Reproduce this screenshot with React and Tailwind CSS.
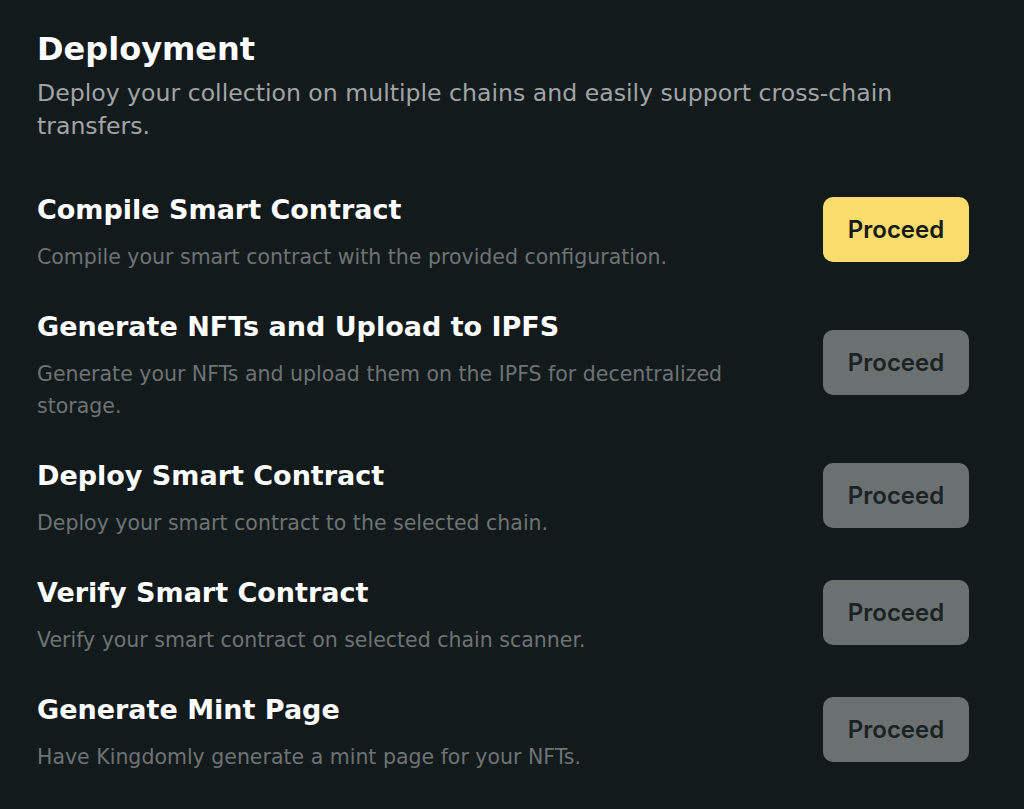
const steps = [
    {
        title: 'Compile Smart Contract',
        description: 'Compile your smart contract with the provided configuration.',
        active: true,
    },
    {
        title: 'Generate NFTs and Upload to IPFS',
        description: 'Generate your NFTs and upload them on the IPFS for decentralized storage.',
    },
    {
        title: 'Deploy Smart Contract',
        description: 'Deploy your smart contract to the selected chain.',
    },
    {
        title: 'Verify Smart Contract',
        description: 'Verify your smart contract on selected chain scanner.',
    },
    {
        title: 'Generate Mint Page',
        description: 'Have Kingdomly generate a mint page for your NFTs.',
    },
]

function Step({ title, description, active }) {
    return (
        <div className="flex items-center justify-between">
            <div className="flex flex-col pt-[8px] w-[740px]">
                <h2 className="text-[27px] leading-[32px] font-bold text-white">{title}</h2>
                <p className="mt-[15px] text-[20.5px] leading-[32px] text-[#6d7373]">{description}</p>
            </div>
            <button
                className={
                    active
                        ? "w-[146px] h-[65px] rounded-[10px] bg-[#f9dc6b] text-[#131a1c] text-[24px] font-semibold font-['Inter',sans-serif]"
                        : "w-[146px] h-[65px] rounded-[10px] bg-[#6b7171] text-[#1b2224] text-[24px] font-semibold font-['Inter',sans-serif]"
                }
            >
                Proceed
            </button>
        </div>
    )
}

export default function App() {
    return (
        <div className="min-h-screen w-full bg-[#131a1c] px-[37px] pt-[29px] font-['DejaVu_Sans',sans-serif]">
            <div className="w-[932px]">
                <h1 className="text-[32px] leading-[40px] font-bold text-white">Deployment</h1>
                <p className="mt-[8px] max-w-[900px] text-[23.6px] leading-[33px] text-[#a0a4a5]">
                    Deploy your collection on multiple chains and easily support cross-chain transfers.
                </p>
                <div className="mt-[43px] flex flex-col gap-[30px]">
                    {steps.map((step) => (
                        <Step key={step.title} {...step} />
                    ))}
                </div>
            </div>
        </div>
    )
}
